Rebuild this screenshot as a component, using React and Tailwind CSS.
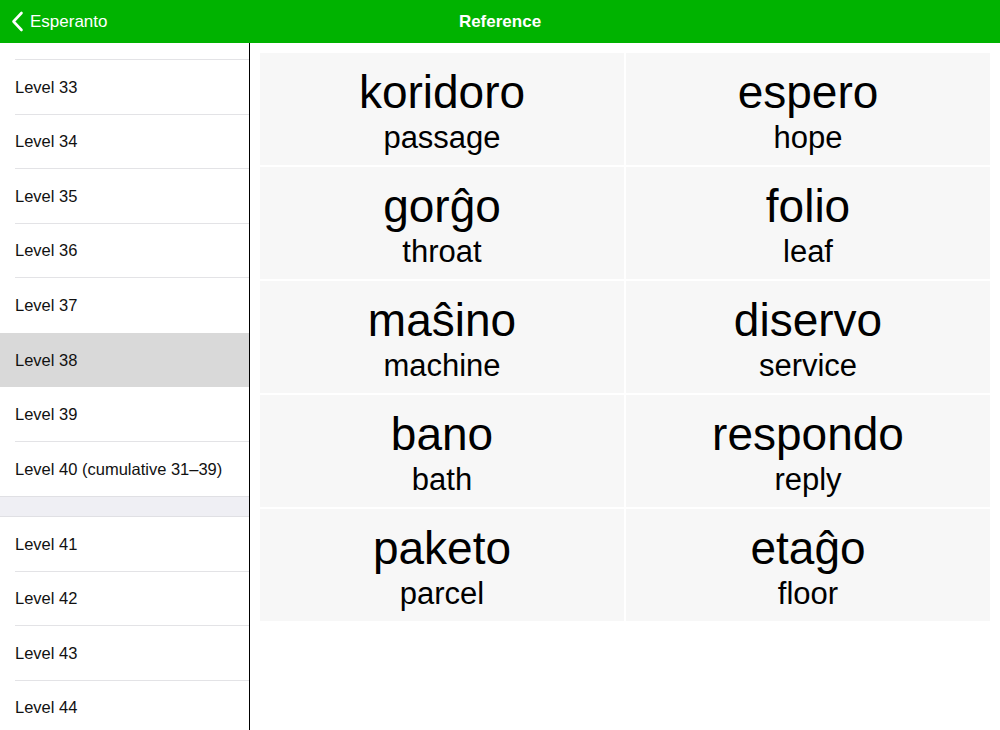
import React from "react";

const levelsA = ["Level 33", "Level 34", "Level 35", "Level 36", "Level 37", "Level 38", "Level 39", "Level 40 (cumulative 31–39)"];
const levelsB = ["Level 41", "Level 42", "Level 43", "Level 44"];

const words = [
  ["koridoro", "passage"],
  ["espero", "hope"],
  ["gorĝo", "throat"],
  ["folio", "leaf"],
  ["maŝino", "machine"],
  ["diservo", "service"],
  ["bano", "bath"],
  ["respondo", "reply"],
  ["paketo", "parcel"],
  ["etaĝo", "floor"],
];

const LevelRow = ({ label, selected, last }) => (
  <div className={`h-[54.5px] pl-[15px] ${selected ? "bg-[#d9d9d9]" : "bg-white"}`}>
    <div
      className={`h-full flex items-center pt-[1px] text-[16.5px] text-[#111] ${
        last || selected ? "" : "border-b border-[#e3e3e6]"
      }`}
    >
      {label}
    </div>
  </div>
);

export default function App() {
  return (
    <div
      className="w-[1000px] h-[730px] flex flex-col bg-white overflow-hidden"
      style={{ fontFamily: '"Liberation Sans", Arial, sans-serif' }}
    >
      {/* Nav bar */}
      <div className="h-[43px] bg-[#00b300] flex items-center relative text-white shrink-0">
        <div className="flex items-center pl-[11px] gap-[6px]">
          <svg width="13" height="21" viewBox="0 0 13 21" fill="none">
            <path d="M10.5 2 L2.5 10.5 L10.5 19" stroke="white" strokeWidth="2.6" strokeLinecap="round" strokeLinejoin="round" />
          </svg>
          <span className="text-[17px]">Esperanto</span>
        </div>
        <div className="absolute left-1/2 -translate-x-1/2 text-[17px] font-bold">
          Reference
        </div>
      </div>

      <div className="flex flex-1 min-h-0">
        {/* Sidebar (scrolled list) */}
        <div className="w-[250px] shrink-0 border-r border-black overflow-hidden">
          <div className="h-[17px] pl-[15px]">
            <div className="h-full border-b border-[#e3e3e6]" />
          </div>
          {levelsA.map((l, i) => (
            <LevelRow
              key={l}
              label={l}
              selected={l === "Level 38"}
              last={i === levelsA.length - 1 || levelsA[i + 1] === "Level 38"}
            />
          ))}
          <div className="h-[21px] bg-[#efeff4] border-t border-b border-[#e0e0e4]" />
          {levelsB.map((l) => (
            <LevelRow key={l} label={l} />
          ))}
        </div>

        {/* Word grid */}
        <div className="flex-1 pt-[10px] pl-[10px] pr-[10px]">
          <div className="grid grid-cols-2 gap-[2px]">
            {words.map(([eo, en]) => (
              <div
                key={eo}
                className="h-[112px] bg-[#f7f7f7] flex flex-col items-center justify-center pt-[2px] text-black"
              >
                <div className="text-[46px] leading-[52px]">{eo}</div>
                <div className="text-[31px] leading-[34px] mt-[3px]">{en}</div>
              </div>
            ))}
          </div>
        </div>
      </div>
    </div>
  );
}
